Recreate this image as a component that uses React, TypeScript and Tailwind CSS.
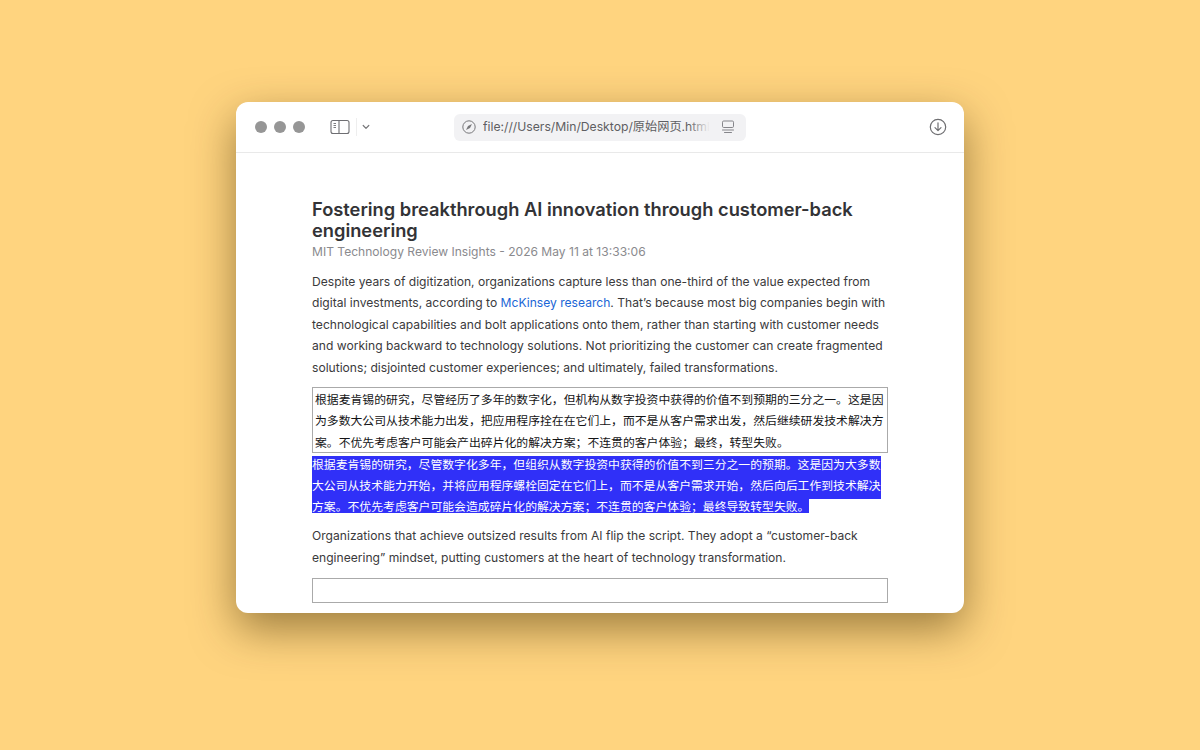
// App.tsx
const cjk = { fontFamily: 'Inter, "Noto Sans CJK SC", sans-serif' };

const SidebarIcon = () => (
  <svg width="20" height="16" viewBox="0 0 20 16" fill="none" stroke="#6e6e72" strokeWidth="1.1">
    <rect x="1" y="1.5" width="18" height="13" rx="2" />
    <path d="M9 1.5v13" />
    <path d="M3.5 4.5h2.5M3.5 6.5h2.5M3.5 8.5h2.5" strokeWidth="0.9" />
  </svg>
);

const Chevron = () => (
  <svg width="8" height="6" viewBox="0 0 8 6" fill="none" stroke="#77777a" strokeWidth="1.2" strokeLinecap="round" strokeLinejoin="round">
    <path d="M1.2 1.5 4 4.3 6.8 1.5" />
  </svg>
);

const CompassIcon = () => (
  <svg width="14" height="14" viewBox="0 0 14 14" fill="none">
    <circle cx="7" cy="7" r="6.2" stroke="#77777a" strokeWidth="1" />
    <path d="M10 4 8 8 4 10 6 6Z" fill="#77777a" />
  </svg>
);

const ReaderIcon = () => (
  <svg width="14" height="14" viewBox="0 0 14 14" fill="none" stroke="#85858a" strokeWidth="1">
    <rect x="1.5" y="1" width="11" height="6.5" rx="1.2" />
    <path d="M1.5 10h11M3.5 12.5h7" strokeLinecap="round" />
  </svg>
);

const DownloadIcon = () => (
  <svg width="18" height="18" viewBox="0 0 18 18" fill="none" stroke="#6f6f72" strokeWidth="1.2" strokeLinecap="round" strokeLinejoin="round">
    <circle cx="9" cy="9" r="7.7" />
    <path d="M9 4.8v7.6M6 9.6 9 12.6 12 9.6" />
  </svg>
);

const Toolbar = () => (
  <div className="flex h-[51px] shrink-0 items-center border-b border-[#e9e9e9] pl-[19px] pr-[17px]">
    <div className="flex gap-[7px]">
      <span className="h-3 w-3 rounded-full bg-[#969696]" />
      <span className="h-3 w-3 rounded-full bg-[#969696]" />
      <span className="h-3 w-3 rounded-full bg-[#969696]" />
    </div>
    <div className="ml-[25px] flex items-center">
      <SidebarIcon />
      <span className="ml-[6px] h-[18px] w-px bg-[#eeeeee]" />
      <span className="ml-[5px] flex">
        <Chevron />
      </span>
    </div>
    <div className="relative ml-[84px] flex h-[27px] w-[292px] items-center rounded-md bg-[#f2f2f4] pl-[8px]">
      <CompassIcon />
      <span className="ml-[7px] w-[226px] overflow-hidden whitespace-nowrap text-[12.2px] text-[#5e5e62]" style={cjk}>
        file:///Users/Min/Desktop/原始网页.html
      </span>
      <span className="absolute left-[234px] top-0 h-full w-[22px] bg-gradient-to-r from-transparent to-[#f2f2f4]" />
      <span className="absolute right-[11px] top-[6px]">
        <ReaderIcon />
      </span>
    </div>
    <div className="ml-auto">
      <DownloadIcon />
    </div>
  </div>
);

const Article = () => (
  <div className="px-[76px] pt-[46px]" style={cjk}>
    <h1 className="text-[18.27px] font-semibold leading-[21px] text-[#333336]">
      Fostering breakthrough AI innovation through customer-back engineering
    </h1>
    <p className="mt-[1px] text-[12.07px] leading-[19px] text-[#8a8a8e]">MIT Technology Review Insights - 2026 May 11 at 13:33:06</p>
    <p className="mt-[10px] text-[12.1px] leading-[21.4px] text-[#3a3a3c]">
      Despite years of digitization, organizations capture less than one-third of the value expected from digital investments, according to{" "}
      <span className="text-[#1a66d6]">McKinsey research</span>. That’s because most big companies begin with technological capabilities and bolt applications onto them, rather than starting with customer needs and working backward to technology solutions. Not prioritizing the customer can create fragmented solutions; disjointed customer experiences; and ultimately, failed transformations.
    </p>
    <div className="mt-[9px] h-[66px] border border-[#aaaaaa] px-[2px] pt-[1.5px] text-[11.85px] leading-[21.5px] text-[#141416]">
      根据麦肯锡的研究，尽管经历了多年的数字化，但机构从数字投资中获得的价值不到预期的三分之一。这是因为多数大公司从技术能力出发，把应用程序拴在在它们上，而不是从客户需求出发，然后继续研发技术解决方案。不优先考虑客户可能会产出碎片化的解决方案；不连贯的客户体验；最终，转型失败。
    </div>
    <div className="mt-[3px] h-[57px] w-[570px] overflow-hidden text-[11.85px] leading-[21px] text-white">
      <div className="-mt-[1.5px]">
        <span className="bg-[#3030f8] py-[6px] [box-decoration-break:clone]">
          根据麦肯锡的研究，尽管数字化多年，但组织从数字投资中获得的价值不到三分之一的预期。这是因为大多数大公司从技术能力开始，并将应用程序螺栓固定在它们上，而不是从客户需求开始，然后向后工作到技术解决方案。不优先考虑客户可能会造成碎片化的解决方案；不连贯的客户体验；最终导致转型失败。
        </span>
      </div>
    </div>
    <p className="mt-[12px] text-[12.1px] leading-[22px] text-[#3a3a3c]">
      Organizations that achieve outsized results from AI flip the script. They adopt a “customer-back engineering” mindset, putting customers at the heart of technology transformation.
    </p>
    <div className="mt-[9px] h-[25px] border border-[#aaaaaa]" />
  </div>
);

export default function App() {
  return (
    <div className="flex h-[750px] w-full justify-center bg-[#ffd47f] pt-[102px]">
      <div className="flex h-[511px] w-[728px] flex-col overflow-hidden rounded-xl bg-white shadow-[0_16px_44px_rgba(60,40,0,0.5)]">
        <Toolbar />
        <Article />
      </div>
    </div>
  );
}
